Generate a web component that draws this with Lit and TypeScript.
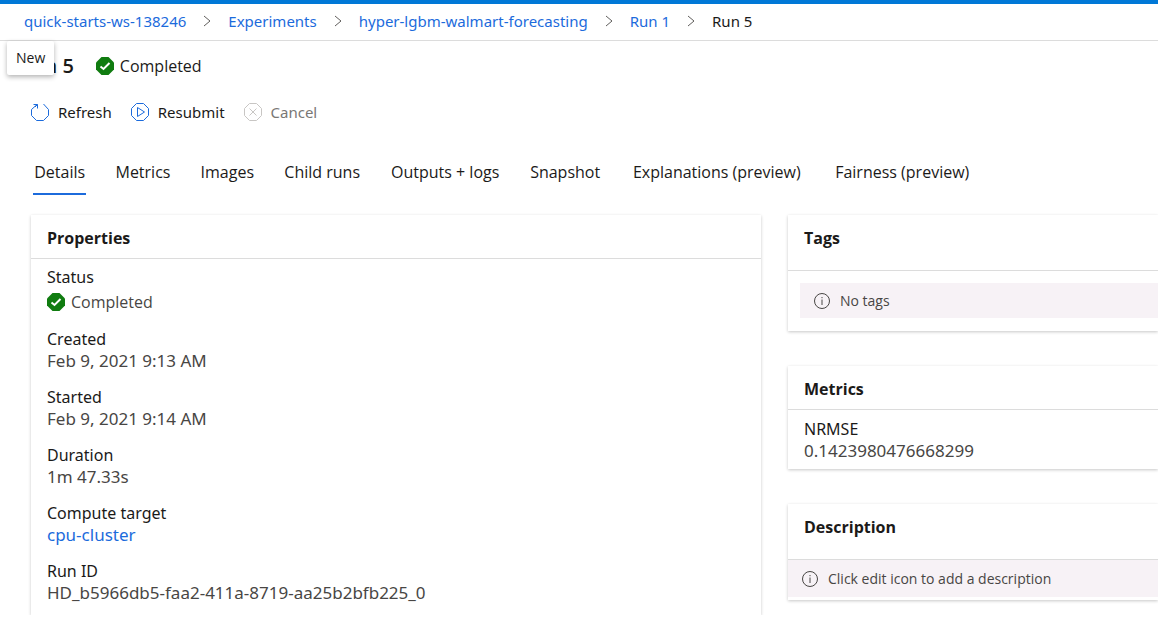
import { LitElement, html, css } from "lit";
import { customElement } from "lit/decorators.js";

const OCTAGON = "M5.5 .5h7l5 5v7l-5 5h-7l-5-5v-7z";

const checkIcon = html`<svg class="icon" viewBox="0 0 18 18" aria-hidden="true">
  <path d="M5.500 0h7L18 5.500v7L12.500 18h-7L0 12.500v-7z" fill="#107c10" stroke="none" />
  <path d="M4.500 9.500l3 2.500 6-6" stroke="#fff" stroke-width="2" />
</svg>`;

const refreshIcon = html`<svg class="icon blue" viewBox="0 0 18 18" aria-hidden="true">
  <path d="M5.500 2L.5 6.500v6l5 5h7l5-5v-6L12.500 1" />
  <path d="M2.500 1.500h4v4M6.500 1.500L4 4" />
</svg>`;

const resubmitIcon = html`<svg class="icon blue" viewBox="0 0 18 18" aria-hidden="true">
  <path d=${OCTAGON} /><path d="M6.500 4.500v9l7-4.500z" />
</svg>`;

const cancelIcon = html`<svg class="icon" viewBox="0 0 18 18" aria-hidden="true">
  <path d=${OCTAGON} /><path d="M5.500 5.500l7 7M12.500 5.500l-7 7" />
</svg>`;

const infoIcon = html`<svg class="icon" viewBox="0 0 18 18" aria-hidden="true">
  <circle cx="9" cy="9" r="7.500" /><path d="M9 7.500v5.500M9 5v1.200" />
</svg>`;

const chevron = html`<svg class="chevron" viewBox="0 0 8 12" aria-hidden="true">
  <path d="M1 1l6 5-6 5" />
</svg>`;

@customElement("app-root")
export class AppRoot extends LitElement {
  static styles = css`
    :host {
      display: block;
      font-family: "Open Sans", "Noto Sans", sans-serif;
      font-size: 16px;
      line-height: 22px;
      color: #1b1a19;
      background: #fff;
    }
    .page {
      box-sizing: border-box;
      display: flex;
      flex-direction: column;
      height: 100vh;
      padding-bottom: 6px;
      border-top: 4px solid #0078d7;
      overflow: hidden;
    }
    a { color: #1c6bdc; text-decoration: none; }
    .crumbs {
      display: flex;
      align-items: center;
      gap: 17px;
      height: 34px;
      flex: none;
      padding: 0 24px 2px;
      border-bottom: 1px solid #dcdcdc;
      font-family: "Noto Sans", "Open Sans", sans-serif;
      font-size: 15px;
      white-space: nowrap;
    }
    .chevron { width: 8px; height: 12px; fill: none; stroke: #605e5c; }
    .title {
      position: relative;
      display: flex;
      align-items: center;
      height: 50px;
      flex: none;
      padding-left: 19px;
    }
    .title h1 { margin: 0 22px 0 0; font-size: 20px; line-height: 28px; font-weight: 600; }
    .tip {
      position: absolute;
      left: 7px;
      top: 0;
      padding: 6px 9px;
      font-size: 14px;
      border-radius: 2px;
      background: #fff;
      box-shadow: 0 2px 5px rgba(0, 0, 0, 0.3);
    }
    .status { display: flex; align-items: center; gap: 6px; }
    .icon { width: 18px; height: 18px; flex: none; fill: none; stroke: currentColor; }
    .blue { color: #1c6bdc; }
    .commands { display: flex; gap: 19px; flex: none; padding: 10px 31px; }
    button {
      font: inherit;
      color: inherit;
      padding: 0;
      border: 0;
      background: none;
      white-space: nowrap;
    }
    .command {
      display: flex;
      align-items: center;
      gap: 9px;
      font-family: "Noto Sans", "Open Sans", sans-serif;
      font-size: 15px;
    }
    .command:disabled { color: #797775; }
    .command:disabled .icon { color: #c8c6c4; }
    .tabs { display: flex; gap: 28px; flex: none; padding: 26px 33px 0; }
    .tab { display: flex; flex-direction: column; align-items: center; padding: 2px 0 10px; border-bottom: 2px solid transparent; }
    .tab::after {
      content: attr(data-label);
      height: 0;
      overflow: hidden;
      visibility: hidden;
      font-weight: 600;
    }
    .tab[aria-selected="true"] { border-color: #1c6bdc; }
    .columns {
      display: grid;
      grid-template-columns: 73fr 37fr;
      gap: 27px;
      flex: 1;
      min-height: 0;
      padding: 20px 0 0 31px;
    }
    .side { display: flex; flex-direction: column; gap: 35px; }
    .card { background: #fff; box-shadow: 0 1px 3px rgba(0, 0, 0, 0.22); }
    .columns > .card { clip-path: inset(-4px -4px 0 -4px); }
    h2 {
      margin: 0;
      padding: 12px 16px 9px;
      font-size: 16px;
      line-height: 22px;
      font-weight: 700;
      border-bottom: 1px solid #dcdcdc;
    }
    .roomy h2 { padding-bottom: 21px; }
    dl {
      margin: 0;
      padding: 8px 16px 7px;
      font-family: "Noto Sans", "Open Sans", sans-serif;
    }
    .columns > .card dl { padding-top: 7px; }
    .field { margin-bottom: 14px; }
    .field:last-child { margin-bottom: 0; }
    dd { margin: 0; font-size: 17px; color: #484644; }
    dd.status { padding: 3px 0 1px; font-size: 16px; font-family: "Open Sans", "Noto Sans", sans-serif; }
    .note {
      display: flex;
      align-items: center;
      gap: 9px;
      padding: 7px 13px;
      font-size: 14px;
      line-height: 21px;
      color: #484644;
      background: #f7f2f6;
    }
    .inset { margin: 12px 0 13px 12px; }
    .flush { margin-bottom: 3px; padding-top: 8px; padding-bottom: 8px; }
  `;

  private crumbs = ["quick-starts-ws-138246", "Experiments", "hyper-lgbm-walmart-forecasting", "Run 1"];
  private tabs = ["Details", "Metrics", "Images", "Child runs", "Outputs + logs", "Snapshot", "Explanations (preview)", "Fairness (preview)"];

  private field(label: string, value: unknown) {
    return html`<div class="field"><dt>${label}</dt><dd>${value}</dd></div>`;
  }

  render() {
    return html`<div class="page">
      <nav class="crumbs" aria-label="Breadcrumb">
        ${this.crumbs.map((c) => html`<a href="#">${c}</a>${chevron}`)}<span aria-current="page">Run 5</span>
      </nav>
      <header class="title">
        <h1>Run 5</h1>
        <span class="status">${checkIcon}Completed</span>
        <span class="tip" role="tooltip">New</span>
      </header>
      <div class="commands">
        <button class="command">${refreshIcon}Refresh</button>
        <button class="command">${resubmitIcon}Resubmit</button>
        <button class="command" disabled>${cancelIcon}Cancel</button>
      </div>
      <div class="tabs" role="tablist">
        ${this.tabs.map((t, i) => html`<button class="tab" role="tab" data-label=${t} aria-selected=${i === 0 ? "true" : "false"}>${t}</button>`)}
      </div>
      <main class="columns">
        <section class="card">
          <h2>Properties</h2>
          <dl>
            <div class="field"><dt>Status</dt><dd class="status">${checkIcon}Completed</dd></div>
            ${this.field("Created", "Feb 9, 2021 9:13 AM")}
            ${this.field("Started", "Feb 9, 2021 9:14 AM")}
            ${this.field("Duration", "1m 47.33s")}
            ${this.field("Compute target", html`<a href="#">cpu-cluster</a>`)}
            ${this.field("Run ID", "HD_b5966db5-faa2-411a-8719-aa25b2bfb225_0")}
          </dl>
        </section>
        <div class="side">
          <section class="card roomy">
            <h2>Tags</h2>
            <div class="note inset">${infoIcon}No tags</div>
          </section>
          <section class="card">
            <h2>Metrics</h2>
            <dl>${this.field("NRMSE", "0.1423980476668299")}</dl>
          </section>
          <section class="card roomy">
            <h2>Description</h2>
            <div class="note flush">${infoIcon}Click edit icon to add a description</div>
          </section>
        </div>
      </main>
    </div>`;
  }
}
